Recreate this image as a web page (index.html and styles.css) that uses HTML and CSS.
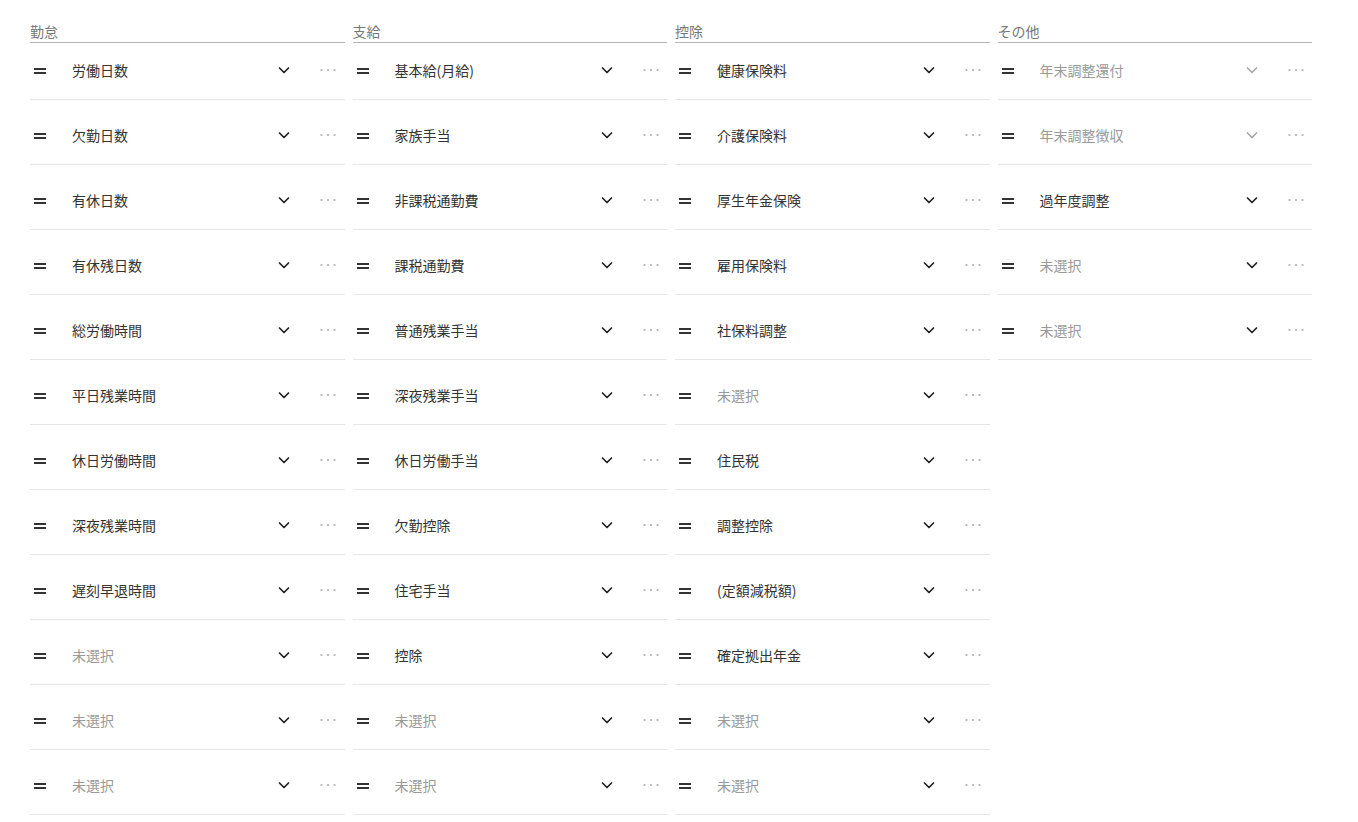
FILE: index.html
```html
<!DOCTYPE html>
<html lang="ja">
<head>
<meta charset="utf-8">
<link rel="stylesheet" href="styles.css">
</head>
<body>
<div class="board" id="board"></div>
<script>
const cols = [
  ["勤怠", ["労働日数","欠勤日数","有休日数","有休残日数","総労働時間","平日残業時間","休日労働時間","深夜残業時間","遅刻早退時間","","",""]],
  ["支給", ["基本給(月給)","家族手当","非課税通勤費","課税通勤費","普通残業手当","深夜残業手当","休日労働手当","欠勤控除","住宅手当","控除","",""]],
  ["控除", ["健康保険料","介護保険料","厚生年金保険","雇用保険料","社保料調整","","住民税","調整控除","(定額減税額)","確定拠出年金","",""]],
  ["その他", ["!年末調整還付","!年末調整徴収","過年度調整","",""]]
];
const handle = '<svg class="handle" width="12" height="8" viewBox="0 0 12 8"><rect x="0" y="1" width="12" height="2" fill="currentColor"/><rect x="0" y="5" width="12" height="2" fill="currentColor"/></svg>';
const chev = '<svg class="chev" width="12" height="12" viewBox="0 0 12 12"><polyline points="1.5,4 6,8.5 10.5,4" fill="none" stroke="currentColor" stroke-width="1.7" stroke-linecap="round" stroke-linejoin="round"/></svg>';
const dots = '<svg class="dots" width="20" height="4" viewBox="0 0 20 4"><circle cx="3.5" cy="2" r="1.1" fill="currentColor"/><circle cx="10" cy="2" r="1.1" fill="currentColor"/><circle cx="16.5" cy="2" r="1.1" fill="currentColor"/></svg>';
const board = document.getElementById('board');
for (const [title, items] of cols) {
  const col = document.createElement('section');
  col.className = 'col';
  let html = '<div class="col-head">' + title + '</div>';
  for (const it of items) {
    let cls = 'row';
    let label = it;
    if (it === '') { cls += ' empty'; label = '未選択'; }
    else if (it.startsWith('!')) { cls += ' disabled'; label = it.slice(1); }
    html += '<div class="' + cls + '">' + handle + '<span class="label">' + label + '</span>' + chev + dots + '</div>';
  }
  col.innerHTML = html;
  board.appendChild(col);
}
</script>
</body>
</html>
```

FILE: styles.css
```css
html, body {
  margin: 0;
  padding: 0;
  background: #ffffff;
}
body {
  font-family: "Noto Sans CJK JP", "Noto Sans", sans-serif;
  color: #333333;
}
.board {
  display: grid;
  grid-template-columns: repeat(4, 314.5px);
  column-gap: 8px;
  align-items: start;
  padding-left: 30px;
  padding-top: 20px;
}
.col {
  display: flex;
  flex-direction: column;
  gap: 8px;
}
.col-head {
  font-size: 14px;
  line-height: 22px;
  height: 22px;
  color: #777777;
  border-bottom: 1px solid #b5b5b5;
  margin-bottom: -8px;
}
.row {
  display: flex;
  align-items: center;
  box-sizing: border-box;
  height: 57px;
  padding-bottom: 2px;
  border-bottom: 1px solid #e6e6e6;
  font-size: 14px;
}
.handle {
  color: #333333;
  margin-left: 4px;
  margin-right: 26px;
  flex: none;
  margin-top: 1px;
}
.label {
  flex: 1;
  color: #333333;
  white-space: nowrap;
}
.row.empty .label,
.row.disabled .label {
  color: #9a9a9a;
}
.chev {
  flex: none;
  color: #222222;
  margin-right: 28px;
}
.row.disabled .chev {
  color: #a8a8a8;
}
.dots {
  flex: none;
  color: #b0b0b0;
  margin-right: 6.5px;
}
```
